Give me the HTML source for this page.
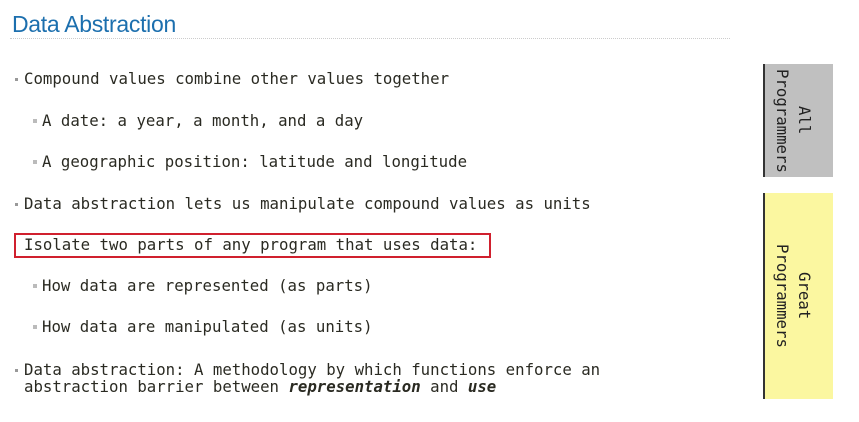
<!DOCTYPE html>
<html><head><meta charset="utf-8"><style>
body{margin:0;width:859px;height:422px;background:#fff;position:relative;overflow:hidden;font-family:"DejaVu Sans Mono","Liberation Mono",monospace;color:#2a2a22}
.t{position:absolute;left:12px;top:11px;font:23px "Liberation Sans",sans-serif;color:#1c6fae;letter-spacing:-0.3px}
.dl{position:absolute;left:10px;top:38px;width:720px;border-top:1px dotted #ccc}
.l{position:absolute;font-size:15.7px;line-height:17px;white-space:pre}
.b{position:absolute;width:3px;height:3px;background:#999}
.sb{position:absolute;width:4px;height:4px;background:#bbb}
.box{position:absolute;left:763px;width:70px;border-left:2px solid #333;box-sizing:border-box;writing-mode:vertical-rl;text-align:center;font:15.7px "DejaVu Sans Mono",monospace;line-height:22px;color:#222;display:flex;align-items:center;justify-content:center;padding-right:12px}
</style></head><body>
<div class="t">Data Abstraction</div>
<div class="dl"></div>
<div class="b" style="left:15px;top:78px"></div><div class="l" style="left:24px;top:70px">Compound values combine other values together</div>
<div class="sb" style="left:33px;top:119px"></div><div class="l" style="left:42px;top:112px">A date: a year, a month, and a day</div>
<div class="sb" style="left:33px;top:160px"></div><div class="l" style="left:42px;top:153px">A geographic position: latitude and longitude</div>
<div class="b" style="left:15px;top:203px"></div><div class="l" style="left:24px;top:195px">Data abstraction lets us manipulate compound values as units</div>
<div style="position:absolute;left:14px;top:233px;width:477px;height:25px;border:2px solid #d0202e;box-sizing:border-box"></div>
<div class="l" style="left:24px;top:236px">Isolate two parts of any program that uses data:</div>
<div class="sb" style="left:33px;top:284px"></div><div class="l" style="left:42px;top:277px">How data are represented (as parts)</div>
<div class="sb" style="left:33px;top:325px"></div><div class="l" style="left:42px;top:318px">How data are manipulated (as units)</div>
<div class="b" style="left:15px;top:369px"></div><div class="l" style="left:24px;top:361px">Data abstraction: A methodology by which functions enforce an
abstraction barrier between <b><i>representation</i></b> and <b><i>use</i></b></div>
<div class="box" style="top:64px;height:113px;background:#c0c0c0"><span>All<br>Programmers</span></div>
<div class="box" style="top:193px;height:206px;background:#fbf7a0"><span>Great<br>Programmers</span></div>
</body></html>
